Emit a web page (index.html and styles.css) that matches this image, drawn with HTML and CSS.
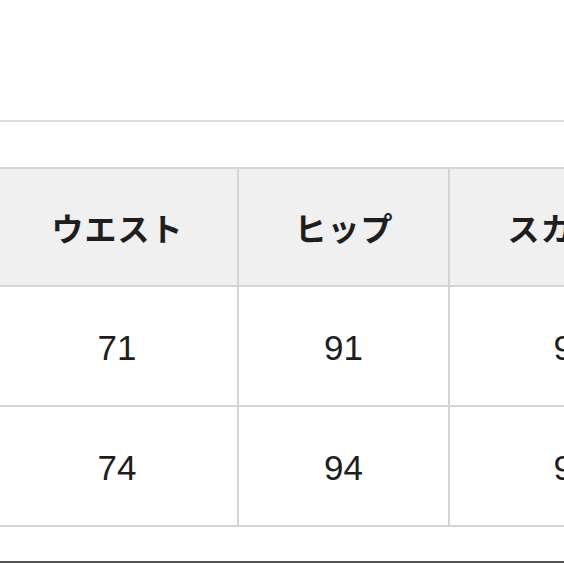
FILE: index.html
```html
<!DOCTYPE html>
<html lang="ja">
<head>
<meta charset="utf-8">
<link rel="stylesheet" href="styles.css">
</head>
<body>
<div class="page">
  <div class="topline"></div>
  <div class="table">
    <div class="cell head">ウエスト</div>
    <div class="cell head">ヒップ</div>
    <div class="cell head">スカート</div>
    <div class="cell num">71</div>
    <div class="cell num">91</div>
    <div class="cell num">98</div>
    <div class="cell num">74</div>
    <div class="cell num">94</div>
    <div class="cell num">99</div>
  </div>
  <div class="bottomline"></div>
</div>
</body>
</html>
```

FILE: styles.css
```css
html, body {
  margin: 0;
  padding: 0;
  background: #ffffff;
  overflow: hidden;
}

.page {
  width: 564px;
  height: 564px;
  overflow: hidden;
  padding-top: 120px;
  box-sizing: border-box;
}

.topline {
  border-top: 2px solid #dcdcdc;
  height: 45px;
}

.table {
  display: grid;
  grid-template-columns: 242px 211px 248px;
  grid-template-rows: 118px 120px 120px;
  margin-left: -3px;
  border-top: 2px solid #d6d6d6;
  width: 701px;
}

.cell {
  display: flex;
  align-items: center;
  justify-content: center;
  border-right: 2px solid #d4d4d4;
  border-bottom: 2px solid #d4d4d4;
  color: #1e1e1e;
}

.head {
  background: #f0f0f0;
  font-family: "Noto Sans CJK JP", sans-serif;
  font-weight: 700;
  font-size: 32px;
  letter-spacing: 1px;
  text-indent: 1px;
}

.num {
  background: #ffffff;
  font-family: "Liberation Sans", Arial, sans-serif;
  font-size: 35px;
  padding-top: 3px;
}

.bottomline {
  margin-top: 34px;
  border-top: 2px solid #555555;
}
```
